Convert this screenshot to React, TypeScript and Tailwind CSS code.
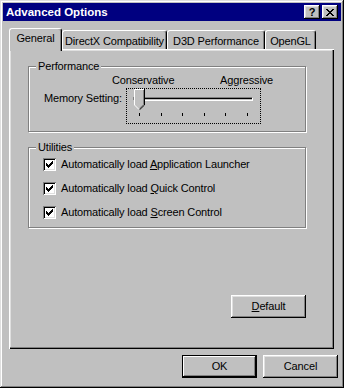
import React from 'react';

const raised =
  'shadow-[inset_-1px_-1px_0_#000,inset_1px_1px_0_#fff,inset_-2px_-2px_0_#808080,inset_2px_2px_0_#dfdfdf]';

function Check() {
  // classic 7x7 win check mark
  const cols = [2, 3, 4, 3, 2, 1, 0];
  return (
    <svg width="13" height="13" viewBox="0 0 13 13" className="block">
      <rect x="0" y="0" width="13" height="13" fill="#808080" />
      <rect x="1" y="1" width="12" height="12" fill="#fff" />
      <rect x="1" y="1" width="11" height="11" fill="#000" />
      <rect x="2" y="2" width="10" height="10" fill="#dfdfdf" />
      <rect x="2" y="2" width="9" height="9" fill="#fff" />
      {cols.map((r, c) => (
        <rect key={c} x={3 + c} y={3 + r} width="1" height="3" fill="#000" />
      ))}
    </svg>
  );
}

function CloseGlyph() {
  const px: [number, number, number][] = [
    [0, 0, 2], [6, 0, 2],
    [1, 1, 2], [5, 1, 2],
    [2, 2, 4],
    [3, 3, 2],
    [2, 4, 4],
    [1, 5, 2], [5, 5, 2],
    [0, 6, 2], [6, 6, 2],
  ];
  return (
    <svg width="8" height="7" viewBox="0 0 8 7" className="block">
      {px.map(([x, y, w], i) => (
        <rect key={i} x={x} y={y} width={w} height="1" fill="#000" />
      ))}
    </svg>
  );
}

function Thumb() {
  return (
    <svg width="11" height="21" viewBox="0 0 11 21" className="block">
      <polygon points="0,0 11,0 11,16 5.5,21 0,16" fill="#c0c0c0" />
      <polyline points="0.5,16 0.5,0.5 10,0.5" fill="none" stroke="#fff" />
      <line x1="0.5" y1="16" x2="5" y2="20.5" stroke="#fff" />
      <polyline points="10.5,0 10.5,16 5.5,20.8" fill="none" stroke="#000" />
      <polyline points="9.5,1 9.5,15.5 5.5,19.3" fill="none" stroke="#808080" />
    </svg>
  );
}

function GroupBox({ label, className, children }: { label: string; className: string; children: React.ReactNode }) {
  return (
    <div
      className={`relative w-[278px] border border-[#808080] shadow-[1px_1px_0_#fff,inset_1px_1px_0_#fff] ${className}`}
    >
      <span className="absolute -top-[7px] left-[7px] px-[2px] bg-[#c0c0c0]">{label}</span>
      {children}
    </div>
  );
}

function CheckRow({ pre, key1, post }: { pre: string; key1: string; post: string }) {
  return (
    <div className="flex items-center gap-[5px] h-[13px]">
      <Check />
      <span>
        {pre}
        <span className="underline">{key1}</span>
        {post}
      </span>
    </div>
  );
}

export default function App() {
  const ticks = [0, 1, 2, 3, 4, 5];

  return (
    <div className="w-[344px] h-[388px] bg-[#c0c0c0] p-[3px] flex flex-col text-black text-[11px] leading-[13px] tracking-[-0.15px] font-['Liberation_Sans',Arial,sans-serif] shadow-[inset_-1px_-1px_0_#000,inset_1px_1px_0_#dfdfdf,inset_-2px_-2px_0_#808080,inset_2px_2px_0_#fff]">
      {/* title bar */}
      <div className="h-[18px] bg-[#000080] flex items-center justify-between pl-[3px] pr-[3px]">
        <span className="text-white font-bold text-[11.5px] tracking-normal">Advanced Options</span>
        <div className="flex gap-[2px]">
          <div className={`w-[16px] h-[14px] bg-[#c0c0c0] flex items-center justify-center font-bold text-[11px] leading-none ${raised}`}>
            ?
          </div>
          <div className={`w-[16px] h-[14px] bg-[#c0c0c0] flex items-center justify-center ${raised}`}>
            <CloseGlyph />
          </div>
        </div>
      </div>

      {/* tabs */}
      <div className="mt-[7px] ml-[6px] h-[21px] flex items-end">
        <div className="relative z-10 w-[53px] h-[23px] -mb-[2px] bg-[#c0c0c0] border-l border-t border-r border-white border-r-black rounded-t-[3px] shadow-[inset_-1px_0_0_#808080] flex justify-center pt-[3px]">
          General
        </div>
        <div className="w-[105px] h-[19px] border-l border-t border-r border-white border-r-black rounded-t-[3px] shadow-[inset_-1px_0_0_#808080] flex items-center justify-center pt-[2px]">
          DirectX Compatibility
        </div>
        <div className="w-[98px] h-[19px] border-l border-t border-r border-white border-r-black rounded-t-[3px] shadow-[inset_-1px_0_0_#808080] flex items-center justify-center pt-[2px]">
          D3D Performance
        </div>
        <div className="w-[51px] h-[19px] border-l border-t border-r border-white border-r-black rounded-t-[3px] shadow-[inset_-1px_0_0_#808080] flex items-center justify-center pt-[2px]">
          OpenGL
        </div>
      </div>

      {/* tab panel */}
      <div className="ml-[6px] w-[325px] h-[300px] pt-[17px] pl-[19px] shadow-[inset_1px_1px_0_#fff,inset_-1px_-1px_0_#000,inset_-2px_-2px_0_#808080,inset_2px_2px_0_#dfdfdf]">
        <GroupBox label="Performance" className="h-[66px]">
          <div className="mt-[7px] ml-[83px] w-[161px] flex justify-between">
            <span>Conservative</span>
            <span>Aggressive</span>
          </div>
          <div className="mt-[1px] flex items-start">
            <span className="ml-[15px] w-[82px] mt-[4px]">Memory Setting:</span>
            <div className="relative w-[135px] h-[36px] border border-dotted border-black">
              <div className="mt-[8px] ml-[6px] w-[120px] h-[4px] border-t border-l border-[#808080] border-b border-r border-b-white border-r-white">
                <div className="h-px bg-black" />
              </div>
              <div className="mt-[12px] ml-[12px] w-[109px] h-[3px] flex justify-between">
                {ticks.map((t) => (
                  <div key={t} className="w-px h-[3px] bg-black" />
                ))}
              </div>
              <div className="absolute left-[7px] top-0">
                <Thumb />
              </div>
            </div>
          </div>
        </GroupBox>

        <GroupBox label="Utilities" className="mt-[15px] h-[81px]">
          <div className="pt-[10px] pl-[14px] flex flex-col gap-[11px]">
            <CheckRow pre="Automatically load " key1="A" post="pplication Launcher" />
            <CheckRow pre="Automatically load " key1="Q" post="uick Control" />
            <CheckRow pre="Automatically load " key1="S" post="creen Control" />
          </div>
        </GroupBox>

        <div className="w-[278px] flex justify-end mt-[67px]">
          <button className={`w-[75px] h-[23px] bg-[#c0c0c0] ${raised}`}>
            <span className="underline">D</span>efault
          </button>
        </div>
      </div>

      {/* footer buttons */}
      <div className="mt-[6px] pr-[3px] flex justify-end gap-[6px]">
        <button className="w-[75px] h-[23px] border border-black bg-[#c0c0c0] shadow-[inset_-1px_-1px_0_#000,inset_1px_1px_0_#fff,inset_-2px_-2px_0_#808080]">
          OK
        </button>
        <button className={`w-[75px] h-[23px] bg-[#c0c0c0] ${raised}`}>Cancel</button>
      </div>
    </div>
  );
}
